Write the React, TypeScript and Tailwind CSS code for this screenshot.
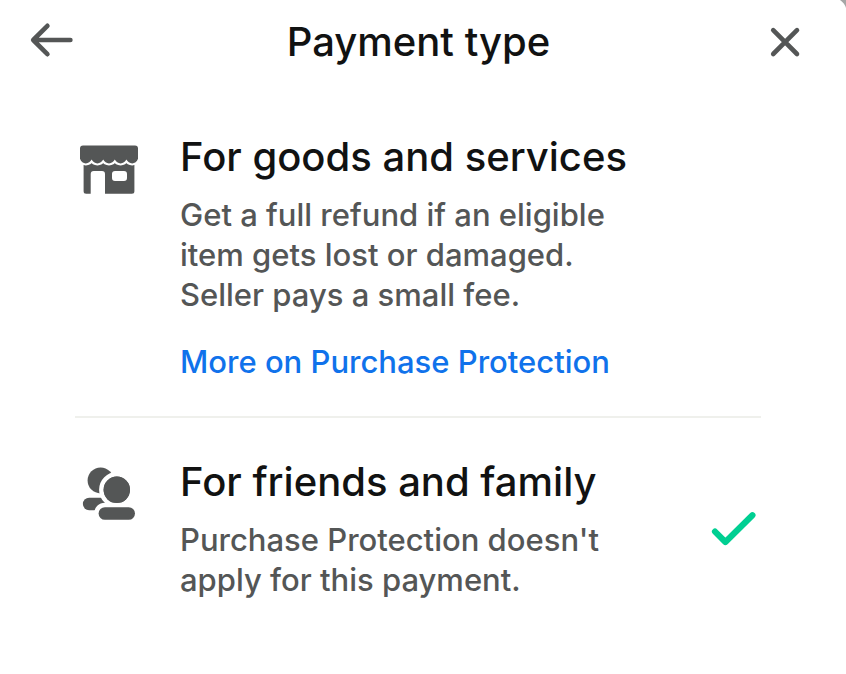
import type { ReactNode } from "react";

function ArrowIcon() {
  return (
    <svg width="48" height="36" viewBox="0 0 48 36" fill="none" stroke="currentColor" strokeWidth="4.6" strokeLinecap="round" strokeLinejoin="round" aria-hidden="true">
      <path d="M42.400 18H5.400M19.400 3.800 5.200 18l14.200 14.200" />
    </svg>
  );
}

function CloseIcon() {
  return (
    <svg width="32" height="32" viewBox="0 0 32 32" fill="none" stroke="currentColor" strokeWidth="4.6" strokeLinecap="round" aria-hidden="true">
      <path d="M4.200 4.200l23.800 23.800M28 4.200 4.200 28" />
    </svg>
  );
}

function StoreIcon() {
  return (
    <svg width="60" height="56" viewBox="0 -4 60 56" fill="currentColor" aria-hidden="true">
      <path fillRule="evenodd" d="M4.600 16h50.800v31.200q0 2.500-2.500 2.500H26V30q0-3-3-3h-8.300q-3 0-3 3v19.700H7.100q-2.500 0-2.500-2.500zM36 27q-3 0-3 3v4q0 3 3 3h9q3 0 3-3v-4q0-3-3-3z" />
      <path
        stroke="#fff"
        strokeWidth="4"
        paintOrder="stroke"
        d="M4 1.400h52q3 0 3 3V14.800c-1 3.200-3.400 4.600-5.800 4.600s-4.600-1.400-5.800-3.800c-1.200 2.400-3.400 3.800-5.800 3.800s-4.600-1.400-5.800-3.800c-1.200 2.400-3.400 3.800-5.800 3.800s-4.600-1.400-5.800-3.800c-1.200 2.400-3.400 3.800-5.800 3.800s-4.600-1.400-5.800-3.800c-1.200 2.400-3.400 3.800-5.800 3.800S2 18 1 14.800V4.400q0-3 3-3z"
      />
    </svg>
  );
}

function PeopleIcon() {
  return (
    <svg width="60" height="56" viewBox="0 0 60 56" fill="currentColor" aria-hidden="true">
      <circle cx="21.600" cy="15.400" r="13" />
      <rect x="3.900" y="32.800" width="30" height="12.400" rx="6.200" />
      <g stroke="#fff" strokeWidth="9" paintOrder="stroke">
        <circle cx="37.800" cy="24.800" r="13.200" />
        <rect x="19.600" y="42.200" width="36.400" height="12.600" rx="6.300" />
      </g>
      <circle cx="37.800" cy="24.800" r="13.200" />
    </svg>
  );
}

function CheckIcon() {
  return (
    <svg width="46" height="36" viewBox="0 0 46 36" fill="none" stroke="currentColor" strokeWidth="6.200" strokeLinecap="round" strokeLinejoin="round" className="pointer-events-none col-start-1 row-start-1 hidden text-[#00cf92] peer-checked:block" aria-hidden="true">
      <path d="M5 20.600 15.400 31 42.400 4.200" />
    </svg>
  );
}

type OptionProps = {
  id: string;
  title: string;
  description: string;
  icon: ReactNode;
  selected?: boolean;
  children?: ReactNode;
};

function PaymentOption({ id, title, description, icon, selected = false, children }: OptionProps) {
  return (
    <li className="flex items-center border-b-2 border-[#eff0ec] pt-10 pb-[34px] last:border-b-0 first:pt-0">
      <div className="w-[105px] shrink-0 self-start pt-[7px] pl-1 text-[#545656]">{icon}</div>
      <div className="min-w-0 flex-1">
        <label htmlFor={id} className="block text-[40px] leading-[48px] font-medium text-[#111212]">
          {title}
        </label>
        <p id={`${id}-description`} className="mt-3.5 max-w-[450px] text-[31px] leading-10 font-medium text-[#545656]">
          {description}
        </p>
        {children}
      </div>
      <div className="grid shrink-0 pr-[5px]">
        <input
          id={id}
          type="radio"
          name="payment-type"
          defaultChecked={selected}
          aria-describedby={`${id}-description`}
          className="peer col-start-1 row-start-1 h-9 w-[46px] cursor-pointer appearance-none"
        />
        <CheckIcon />
      </div>
    </li>
  );
}

export default function App() {
  return (
    <main className="relative min-h-screen bg-white font-['Inter',sans-serif]">
      <svg className="absolute top-0 right-0 text-[#a6a6a6]" width="6" height="8" viewBox="0 0 6 8" fill="currentColor" aria-hidden="true">
        <path d="M0 0h6v8Q4.500 3 0 0z" />
      </svg>
      <header className="flex items-center justify-between pt-[18px] pr-[37px] pl-7 text-[#545656]">
        <button type="button" aria-label="Back" className="flex w-12 justify-center pb-1">
          <ArrowIcon />
        </button>
        <h1 className="text-[40px] leading-[48px] font-medium text-[#111212]">Payment type</h1>
        <button type="button" aria-label="Close" className="flex w-12 justify-center">
          <CloseIcon />
        </button>
      </header>
      <ul className="mt-[67px] pr-[85px] pl-[75px]">
        <PaymentOption
          id="goods"
          title="For goods and services"
          description="Get a full refund if an eligible item gets lost or damaged. Seller pays a small fee."
          icon={<StoreIcon />}
        >
          <a href="#protection" className="mt-[27px] block text-[31px] leading-10 font-medium text-[#1072eb]">
            More on Purchase Protection
          </a>
        </PaymentOption>
        <PaymentOption
          id="family"
          title="For friends and family"
          description="Purchase Protection doesn't apply for this payment."
          icon={<PeopleIcon />}
          selected
        />
      </ul>
    </main>
  );
}
